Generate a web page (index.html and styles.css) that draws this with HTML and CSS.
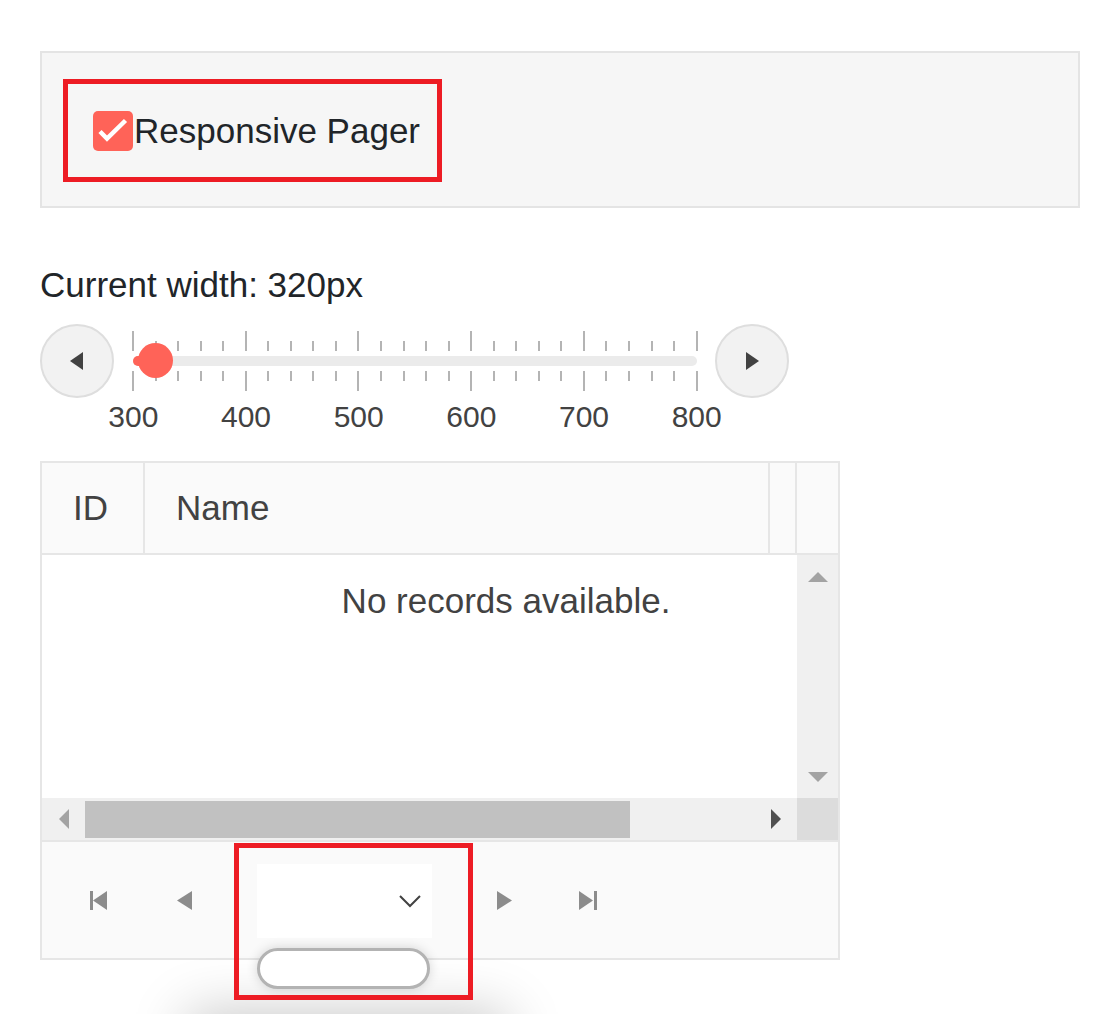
FILE: index.html
```html
<!DOCTYPE html>
<html lang="en">
<head>
<meta charset="utf-8">
<title>Responsive Pager</title>
<link rel="stylesheet" href="styles.css">
</head>
<body>
<div class="page">
  <div class="panel">
    <label class="check-wrap">
      <span class="checkbox">
        <svg width="40" height="40" viewBox="0 0 40 40"><polyline points="7,20.5 14,27.5 32.5,9.5" fill="none" stroke="#fff" stroke-width="4.5"/></svg>
      </span>
      <span class="check-label">Responsive Pager</span>
    </label>
  </div>

  <div class="width-label">Current width: 320px</div>

  <div class="slider">
    <div class="slider-btn">
      <svg width="16" height="20" viewBox="0 0 16 20"><polygon points="1,10 14,1 14,19" fill="#424242"/></svg>
    </div>
    <div class="track-col">
      <div class="ticks ticks-top">
        <span class="tick major"></span><span class="tick"></span><span class="tick"></span><span class="tick"></span><span class="tick"></span>
        <span class="tick major"></span><span class="tick"></span><span class="tick"></span><span class="tick"></span><span class="tick"></span>
        <span class="tick major"></span><span class="tick"></span><span class="tick"></span><span class="tick"></span><span class="tick"></span>
        <span class="tick major"></span><span class="tick"></span><span class="tick"></span><span class="tick"></span><span class="tick"></span>
        <span class="tick major"></span><span class="tick"></span><span class="tick"></span><span class="tick"></span><span class="tick"></span>
        <span class="tick major"></span>
      </div>
      <div class="track"><div class="selection"></div></div>
      <div class="ticks ticks-bottom">
        <span class="tick major"></span><span class="tick"></span><span class="tick"></span><span class="tick"></span><span class="tick"></span>
        <span class="tick major"></span><span class="tick"></span><span class="tick"></span><span class="tick"></span><span class="tick"></span>
        <span class="tick major"></span><span class="tick"></span><span class="tick"></span><span class="tick"></span><span class="tick"></span>
        <span class="tick major"></span><span class="tick"></span><span class="tick"></span><span class="tick"></span><span class="tick"></span>
        <span class="tick major"></span><span class="tick"></span><span class="tick"></span><span class="tick"></span><span class="tick"></span>
        <span class="tick major"></span>
      </div>
      <div class="labels">
        <span>300</span><span>400</span><span>500</span><span>600</span><span>700</span><span>800</span>
      </div>
      <div class="thumb"></div>
    </div>
    <div class="slider-btn">
      <svg width="16" height="20" viewBox="0 0 16 20"><polygon points="15,10 2,1 2,19" fill="#424242"/></svg>
    </div>
  </div>

  <div class="grid">
    <div class="grid-header">
      <div class="th th-id">ID</div>
      <div class="th th-name">Name</div>
      <div class="th th-extra"></div>
      <div class="th-gutter"></div>
    </div>
    <div class="grid-body">
      <div class="grid-viewport">
        <div class="norecords">No records available.</div>
      </div>
      <div class="vscroll">
        <span class="sarrow"><svg width="22" height="12" viewBox="0 0 22 12"><polygon points="11,1 1,11 21,11" fill="#a3a3a3"/></svg></span>
        <span class="sarrow"><svg width="22" height="12" viewBox="0 0 22 12"><polygon points="1,1 21,1 11,11" fill="#a3a3a3"/></svg></span>
      </div>
    </div>
    <div class="hscroll-row">
      <div class="hscroll">
        <span class="harrow"><svg width="12" height="22" viewBox="0 0 12 22"><polygon points="1,11 11,1 11,21" fill="#a3a3a3"/></svg></span>
        <div class="htrack"><div class="hthumb"></div></div>
        <span class="harrow"><svg width="12" height="22" viewBox="0 0 12 22"><polygon points="11,11 1,1 1,21" fill="#505050"/></svg></span>
      </div>
      <div class="corner"></div>
    </div>
    <div class="pager">
      <span class="pbtn">
        <svg width="40" height="40" viewBox="0 0 40 40"><rect x="10" y="11" width="3" height="19" fill="#8c8c8c"/><polygon points="13,20.5 27,11 27,30" fill="#8c8c8c"/></svg>
      </span>
      <span class="pbtn">
        <svg width="40" height="40" viewBox="0 0 40 40"><polygon points="12,20.5 27,11 27,30" fill="#8c8c8c"/></svg>
      </span>
      <div class="pdrop">
        <svg width="24" height="14" viewBox="0 0 24 14"><polyline points="2,2 12,12 22,2" fill="none" stroke="#424242" stroke-width="2"/></svg>
        <div class="popup-shadow"></div>
        <div class="pill"></div>
        <div class="mark"></div>
      </div>
      <span class="pbtn">
        <svg width="40" height="40" viewBox="0 0 40 40"><polygon points="28,20.5 13,11 13,30" fill="#8c8c8c"/></svg>
      </span>
      <span class="pbtn">
        <svg width="40" height="40" viewBox="0 0 40 40"><polygon points="10,11 10,30 24,20.5" fill="#8c8c8c"/><rect x="25" y="11" width="3" height="19" fill="#8c8c8c"/></svg>
      </span>
    </div>
  </div>
</div>
</body>
</html>
```

FILE: styles.css
```css
html {
  overflow: hidden;
}

body {
  margin: 0;
  padding: 0;
  min-height: 1014px;
  background: #ffffff;
  font-family: "Liberation Sans", Arial, sans-serif;
  color: #212529;
}

.page {
  padding: 51px 23px 0 40px;
}

/* top options panel */
.panel {
  width: 1040px;
  box-sizing: border-box;
  border: 2px solid #e4e4e4;
  background: #f6f6f6;
  padding: 26px 21px 24px;
}

.check-wrap {
  display: inline-flex;
  align-items: center;
  box-sizing: border-box;
  height: 103px;
  border: 5px solid #ed1c24;
  padding: 0 17px 0 25px;
}

.checkbox {
  width: 40px;
  height: 40px;
  border-radius: 5px;
  background: #ff6358;
  display: flex;
  flex-shrink: 0;
}

.check-label {
  font-size: 35px;
  line-height: 40px;
  margin-left: 1px;
  color: #212529;
}

/* width label */
.width-label {
  margin-top: 57px;
  font-size: 35px;
  line-height: 40px;
  color: #212529;
}

/* slider */
.slider {
  margin-top: 19px;
  display: flex;
  align-items: flex-start;
}

.slider-btn {
  width: 74px;
  height: 74px;
  box-sizing: border-box;
  border-radius: 50%;
  border: 2px solid #dedede;
  background: #f2f2f2;
  display: flex;
  align-items: center;
  justify-content: center;
  flex-shrink: 0;
}

.track-col {
  position: relative;
  width: 566px;
  margin: 7px 17px 0 18px;
}

.ticks {
  display: flex;
  justify-content: space-between;
  height: 20px;
}

.ticks-top {
  align-items: flex-end;
}

.ticks-bottom {
  align-items: flex-start;
  margin-top: 5px;
}

.tick {
  width: 2px;
  height: 10px;
  background: #b4b4b4;
}

.tick.major {
  height: 20px;
}

.track {
  margin: 5px 1px 0;
  height: 10px;
  border-radius: 5px;
  background: #ebebeb;
}

.selection {
  width: 22px;
  height: 10px;
  border-radius: 5px;
  background: #ff6358;
}

.thumb {
  position: absolute;
  left: 6px;
  top: 12px;
  width: 35px;
  height: 35px;
  border-radius: 50%;
  background: #ff6358;
}

.labels {
  display: flex;
  margin: 9px -55px 0;
}

.labels span {
  flex: 1;
  text-align: center;
  font-size: 30px;
  line-height: 34px;
  color: #424242;
}

/* grid */
.grid {
  margin-top: 27px;
  width: 800px;
  box-sizing: border-box;
  border: 2px solid #e6e6e6;
  color: #424242;
}

.grid-header {
  display: flex;
  height: 90px;
  background: #fafafa;
  border-bottom: 2px solid #e6e6e6;
}

.th {
  display: flex;
  align-items: center;
  font-size: 35px;
  padding-left: 31px;
  box-sizing: border-box;
  border-right: 2px solid #e6e6e6;
}

.th-id {
  width: 103px;
}

.th-name {
  width: 625px;
}

.th-extra {
  width: 27px;
  padding-left: 0;
}

.th-gutter {
  width: 41px;
}

.grid-body {
  display: flex;
  height: 243px;
}

.grid-viewport {
  width: 755px;
  overflow: hidden;
  background: #ffffff;
}

.norecords {
  width: 928px;
  padding-top: 26px;
  text-align: center;
  font-size: 35px;
  line-height: 40px;
  color: #424242;
}

.vscroll {
  width: 41px;
  background: #f0f0f0;
  display: flex;
  flex-direction: column;
  justify-content: space-between;
}

.sarrow {
  height: 43px;
  display: flex;
  align-items: center;
  justify-content: center;
}

.hscroll-row {
  display: flex;
  height: 42px;
}

.hscroll {
  width: 755px;
  display: flex;
  background: #f0f0f0;
}

.harrow {
  width: 43px;
  display: flex;
  align-items: center;
  justify-content: center;
  flex-shrink: 0;
}

.htrack {
  flex: 1;
  padding: 3px 0 2px;
}

.hthumb {
  width: 545px;
  height: 100%;
  background: #c1c1c1;
}

.corner {
  width: 41px;
  background: #dcdcdc;
}

/* pager */
.pager {
  height: 116px;
  border-top: 2px solid #e6e6e6;
  background: #fafafa;
  display: flex;
  align-items: center;
  gap: 45px;
  padding-left: 38px;
}

.pbtn {
  width: 40px;
  height: 40px;
  display: flex;
}

.pdrop {
  position: relative;
  width: 175px;
  height: 74px;
  margin: 2px 7px 0;
  box-sizing: border-box;
  background: #ffffff;
  display: flex;
  align-items: center;
  justify-content: flex-end;
  padding-right: 10px;
}

.pill {
  position: absolute;
  left: 0;
  top: 84px;
  width: 173px;
  height: 41px;
  box-sizing: border-box;
  border: 3px solid #b3b3b3;
  border-radius: 21px;
  background: #ffffff;
  box-shadow: 0 0 12px rgba(0, 0, 0, 0.16);
}

.popup-shadow {
  position: absolute;
  left: -50px;
  top: 168px;
  width: 280px;
  height: 120px;
  background: #ffffff;
  box-shadow: 0 0 55px 20px rgba(0, 0, 0, 0.22);
}

.mark {
  position: absolute;
  left: -23px;
  top: -21px;
  width: 239px;
  height: 157px;
  box-sizing: border-box;
  border: 5px solid #ed1c24;
}
```
